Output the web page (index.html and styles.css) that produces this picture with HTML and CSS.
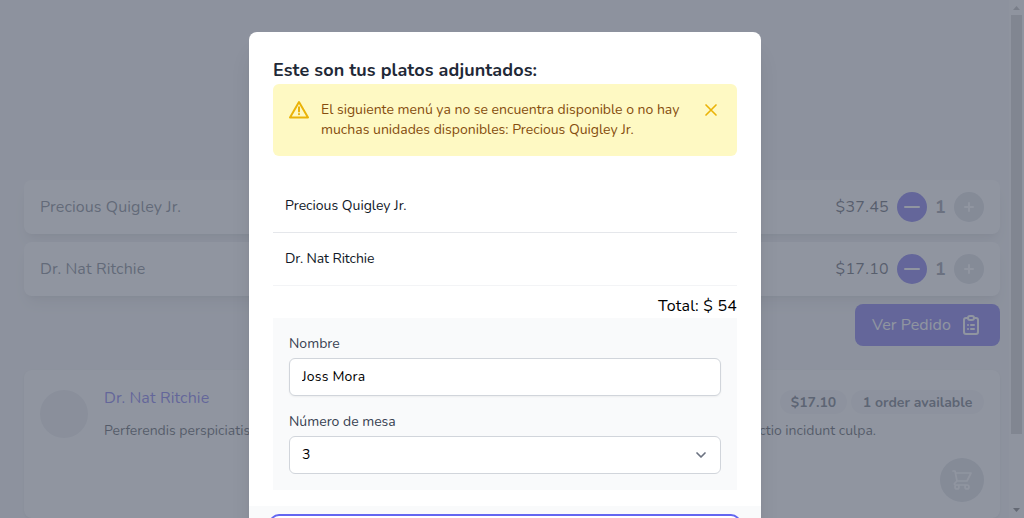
FILE: index.html
```html
<!DOCTYPE html>
<html lang="es">
<head>
<meta charset="utf-8">
<title>Pedido</title>
<link rel="stylesheet" href="styles.css">
</head>
<body>
<div class="page">
  <main class="content">
    <div class="order-row">
      <span class="order-name">Precious Quigley Jr.</span>
      <span class="order-price">$37.45</span>
      <button class="round minus"><svg viewBox="0 0 24 24"><path d="M5 12h14"/></svg></button>
      <span class="qty">1</span>
      <button class="round plus"><svg viewBox="0 0 24 24"><path d="M12 8v8M8 12h8"/></svg></button>
    </div>
    <div class="order-row">
      <span class="order-name">Dr. Nat Ritchie</span>
      <span class="order-price">$17.10</span>
      <button class="round minus"><svg viewBox="0 0 24 24"><path d="M5 12h14"/></svg></button>
      <span class="qty">1</span>
      <button class="round plus"><svg viewBox="0 0 24 24"><path d="M12 8v8M8 12h8"/></svg></button>
    </div>
    <button class="view-order">
      <span>Ver Pedido</span>
      <svg viewBox="0 0 24 24"><path d="M9 5H7a2 2 0 0 0-2 2v12a2 2 0 0 0 2 2h10a2 2 0 0 0 2-2V7a2 2 0 0 0-2-2h-2M9 5a2 2 0 0 0 2 2h2a2 2 0 0 0 2-2M9 5a2 2 0 0 1 2-2h2a2 2 0 0 1 2 2m-3 7h3m-3 4h3m-6-4h.01M9 16h.01"/></svg>
    </button>
    <article class="menu-card">
      <div class="avatar"></div>
      <div class="menu-body">
        <div class="menu-head">
          <span class="menu-title">Dr. Nat Ritchie</span>
          <span class="pill pill-price">$17.10</span>
          <span class="pill pill-stock">1 order available</span>
        </div>
        <div class="menu-text"><span>Perferendis perspiciatis</span><span>distinctio incidunt culpa.</span></div>
        <button class="cart"><svg viewBox="0 0 24 24"><path d="M3 3h2l.4 2M7 13h10l4-8H5.400M7 13L5.400 5M7 13l-2.293 2.293c-.63.63-.184 1.707.707 1.707H17m0 0a2 2 0 1 0 0 4 2 2 0 0 0 0-4zm-8 2a2 2 0 1 1-4 0 2 2 0 0 1 4 0z"/></svg></button>
      </div>
    </article>
  </main>
  <div class="scrollbar">
    <svg class="arrow-off" viewBox="0 0 15 15"><path d="M7.500 6L11 10H4z"/></svg>
    <div class="thumb"></div>
    <svg viewBox="0 0 15 15"><path d="M4 5h7l-3.500 4z"/></svg>
  </div>
</div>
<div class="overlay">
  <section class="modal">
    <div class="modal-body">
      <h3 class="modal-title">Este son tus platos adjuntados:</h3>
      <div class="alert">
        <svg class="warn" viewBox="0 0 20 20"><path d="M10 2L19 17.500H1zM10 7.200v4.300M10 14v.300"/></svg>
        <p>El siguiente menú ya no se encuentra disponible o no hay<br>muchas unidades disponibles: Precious Quigley Jr.</p>
        <svg class="close" viewBox="0 0 24 24"><path d="M6 6l12 12M18 6L6 18"/></svg>
      </div>
      <div class="dishes">
        <div class="dish">Precious Quigley Jr.</div>
        <div class="dish last">Dr. Nat Ritchie</div>
      </div>
      <div class="total">Total: $ 54</div>
      <form class="form">
        <label for="name">Nombre</label>
        <input id="name" value="Joss Mora">
        <label class="label-table">Número de mesa</label>
        <div class="select"><span>3</span><svg viewBox="0 0 20 20"><path d="M6 8l4 4 4-4"/></svg></div>
      </form>
    </div>
    <footer class="modal-foot"><button class="submit"></button></footer>
  </section>
</div>
</body>
</html>
```
FILE: styles.css
```css
* { box-sizing: border-box; }
body { margin: 0; height: 518px; overflow: hidden; font: 16px/24px Nunito, Lato, sans-serif; color: #000; }
button { border: 0; padding: 0; font: inherit; display: flex; align-items: center; justify-content: center; }
svg { fill: none; stroke: currentColor; stroke-width: 2; stroke-linecap: round; stroke-linejoin: round; flex: none; }
p, h3 { margin: 0; }
.page { height: 518px; display: flex; background: #f3f4f6; }
.content { flex: 1; padding: 180px 9px 0 24px; display: flex; flex-direction: column; gap: 8px; }
.order-row { height: 54px; flex: none; padding: 0 16px; display: flex; align-items: center; gap: 8px; background: #fff; border-radius: 8px; box-shadow: 0 10px 15px -3px rgba(0,0,0,.1), 0 4px 6px -4px rgba(0,0,0,.1); }
.order-name { flex: 1; color: #4b5563; letter-spacing: .1px; }
.order-price { color: #1f2937; letter-spacing: .3px; }
.round { width: 30px; height: 30px; border-radius: 50%; color: #fff; }
.round svg { width: 24px; height: 24px; }
.minus { background: #4f46e5; }
.plus { background: #d1d5db; }
.qty { width: 11px; text-align: center; font-size: 18px; font-weight: 700; color: #6b7280; }
.view-order { align-self: flex-end; flex: none; width: 145px; height: 42px; gap: 8px; border-radius: 8px; background: #4f46e5; color: #fff; letter-spacing: .1px; }
.view-order svg { width: 24px; height: 24px; }
.menu-card { margin-top: 16px; height: 148px; flex: none; display: flex; gap: 16px; padding: 20px 16px; background: #fff; border-radius: 8px; box-shadow: 0 1px 3px rgba(0,0,0,.1); }
.avatar { width: 48px; height: 48px; border-radius: 50%; background: #e5e7eb; }
.menu-body { flex: 1; display: flex; flex-direction: column; }
.menu-head { display: flex; align-items: flex-end; gap: 4px; height: 25px; margin-bottom: 6px; }
.menu-title { flex: 1; align-self: flex-start; margin-top: -4px; color: #4f46e5; letter-spacing: .1px; }
.pill { height: 24px; border-radius: 12px; background: #f3f4f6; font-size: 14px; line-height: 25px; font-weight: 700; color: #374151; text-align: center; }
.pill-price { width: 67px; }
.pill-stock { width: 133px; }
.menu-text { display: flex; justify-content: space-between; padding: 1px 108px 0 0; font-size: 14px; line-height: 20px; color: #111827; }
.cart { align-self: flex-end; margin-top: 17px; width: 44px; height: 44px; flex: none; border-radius: 50%; background: #d1d5db; color: #fff; }
.cart svg { width: 24px; height: 24px; stroke-width: 1.700; }
.scrollbar { width: 15px; background: #fafafa; display: flex; flex-direction: column; align-items: center; }
.scrollbar svg { width: 15px; height: 15px; fill: #505050; stroke: none; }
.scrollbar .arrow-off { fill: #a3a3a3; }
.thumb { width: 11px; height: 419px; margin-bottom: 69px; background: #c1c1c1; }
.overlay { position: absolute; inset: 0; display: flex; justify-content: center; align-items: flex-start; padding: 32px 15px 0 1px; overflow: hidden; background: rgba(107,114,128,.75); }
.modal { width: 512px; border-radius: 8px; overflow: hidden; background: #fff; box-shadow: 0 20px 25px -5px rgba(0,0,0,.1), 0 8px 10px -6px rgba(0,0,0,.1); }
.modal-body { padding: 24px 24px 16px; }
.modal-title { font-size: 18px; line-height: 28px; font-weight: 700; letter-spacing: .1px; color: #1f2937; }
.alert { display: flex; height: 72px; padding: 16px; border-radius: 6px; background: #fef9c3; color: #854d0e; font-size: 14px; line-height: 20px; }
.alert p { flex: 1; margin-left: 12px; white-space: nowrap; }
.warn { width: 20px; height: 20px; color: #eab308; }
.close { width: 20px; height: 20px; color: #eab308; }
.dishes { margin-top: 24px; font-size: 14px; line-height: 20px; color: #111827; }
.dish { height: 53px; padding: 16px 12px; border-bottom: 1px solid #e5e7eb; }
.dish.last { border-color: #f3f4f6; letter-spacing: -.1px; }
.total { margin-top: 8px; text-align: right; letter-spacing: .2px; }
.form { padding: 16px; background: #f9fafb; display: flex; flex-direction: column; font-size: 14px; line-height: 20px; color: #374151; }
.form input, .select { width: 100%; height: 38px; margin-top: 4px; padding: 0 12px; border: 1px solid #d1d5db; border-radius: 6px; background: #fff; font: inherit; color: #000; box-shadow: 0 1px 2px rgba(0,0,0,.05); }
.form input { padding-bottom: 2px; letter-spacing: .2px; }
.label-table { margin-top: 16px; }
.select { display: flex; align-items: center; justify-content: space-between; padding-right: 9px; box-shadow: none; }
.select svg { width: 20px; height: 20px; color: #6b7280; stroke-width: 1.7; }
.modal-foot { padding: 12px 24px; background: #f9fafb; }
.submit { width: 100%; height: 38px; border-radius: 6px; background: #4f46e5; box-shadow: 0 0 0 2px #fff, 0 0 0 4px #6366f1; }
```
